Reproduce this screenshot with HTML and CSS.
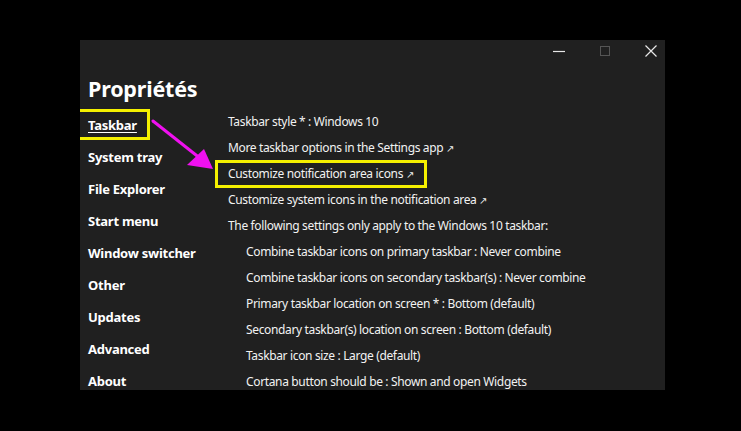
FILE: index.html
```html
<!DOCTYPE html>
<html>
<head>
<meta charset="utf-8">
<link rel="stylesheet" href="styles.css">
</head>
<body>
<div class="window">
  <div class="titlebar">
    <span class="ctl">
      <svg width="14" height="14" viewBox="0 0 14 14"><path d="M1 7.5h12" stroke="#e8e8e8" stroke-width="1.2"/></svg>
    </span>
    <span class="ctl">
      <svg width="14" height="14" viewBox="0 0 14 14"><rect x="2.5" y="2.5" width="9" height="9" fill="none" stroke="#555" stroke-width="1"/></svg>
    </span>
    <span class="ctl">
      <svg width="14" height="14" viewBox="0 0 14 14"><path d="M1.5 1.5l11 11M12.5 1.5l-11 11" stroke="#e8e8e8" stroke-width="1.2"/></svg>
    </span>
  </div>
  <h1 class="title">Propriétés</h1>
  <div class="main">
    <ul class="nav">
      <li class="active">Taskbar</li>
      <li>System tray</li>
      <li>File Explorer</li>
      <li>Start menu</li>
      <li>Window switcher</li>
      <li>Other</li>
      <li>Updates</li>
      <li>Advanced</li>
      <li>About</li>
    </ul>
    <ul class="content">
      <li>Taskbar style * : Windows 10</li>
      <li>More taskbar options in the Settings app <span class="ext">↗</span></li>
      <li>Customize notification area icons <span class="ext">↗</span></li>
      <li>Customize system icons in the notification area <span class="ext">↗</span></li>
      <li>The following settings only apply to the Windows 10 taskbar:</li>
      <li class="sub">Combine taskbar icons on primary taskbar : Never combine</li>
      <li class="sub">Combine taskbar icons on secondary taskbar(s) : Never combine</li>
      <li class="sub">Primary taskbar location on screen * : Bottom (default)</li>
      <li class="sub">Secondary taskbar(s) location on screen : Bottom (default)</li>
      <li class="sub">Taskbar icon size : Large (default)</li>
      <li class="sub">Cortana button should be : Shown and open Widgets</li>
    </ul>
  </div>
  <div class="mark mark-nav"></div>
  <div class="mark mark-item"></div>
  <svg class="arrow" width="80" height="70" viewBox="0 0 80 70">
    <path d="M2 2 L50 40" stroke="#f010f0" stroke-width="3" stroke-linecap="round"/>
    <path d="M62 50 L36 46 L53 30 Z" fill="#f010f0"/>
  </svg>
</div>
</body>
</html>
```
FILE: styles.css
```css
html, body {
  margin: 0;
  padding: 0;
  background: #000;
}
body {
  width: 741px;
  height: 431px;
  overflow: hidden;
  font-family: "Noto Sans", "Open Sans", sans-serif;
  color: #fff;
}
.window {
  position: relative;
  margin: 40px 0 0 80px;
  width: 585px;
  height: 350px;
  background: #202020;
  overflow: hidden;
}
.titlebar {
  height: 32px;
  display: flex;
  justify-content: flex-end;
  gap: 18px;
}
.ctl {
  width: 28px;
  height: 22px;
  display: flex;
  align-items: center;
  justify-content: center;
}
.title {
  margin: 2px 0 5px 8px;
  font-size: 21.5px;
  line-height: 30px;
  font-weight: 700;
  letter-spacing: -0.2px;
}
.main {
  display: flex;
}
ul {
  list-style: none;
  margin: 0;
  padding: 0;
}
.nav {
  width: 140px;
  padding-left: 8px;
}
.nav li {
  height: 32px;
  line-height: 32px;
  font-size: 13px;
  font-weight: 700;
  letter-spacing: -0.25px;
}
.nav li.active {
  text-decoration: underline;
  text-underline-offset: 2px;
}
.content li {
  height: 26px;
  line-height: 26px;
  font-size: 12px;
  letter-spacing: -0.35px;
  white-space: nowrap;
  color: #f2f2f2;
}
.content li.sub {
  padding-left: 18px;
}
.ext {
  font-size: 10px;
}
.mark {
  position: absolute;
  border: 3px solid #f5f000;
  box-sizing: border-box;
}
.mark-nav {
  left: -5px;
  top: 69px;
  width: 75px;
  height: 31px;
}
.mark-item {
  left: 135px;
  top: 120px;
  width: 212px;
  height: 28px;
}
.arrow {
  position: absolute;
  left: 71px;
  top: 79px;
}
```
